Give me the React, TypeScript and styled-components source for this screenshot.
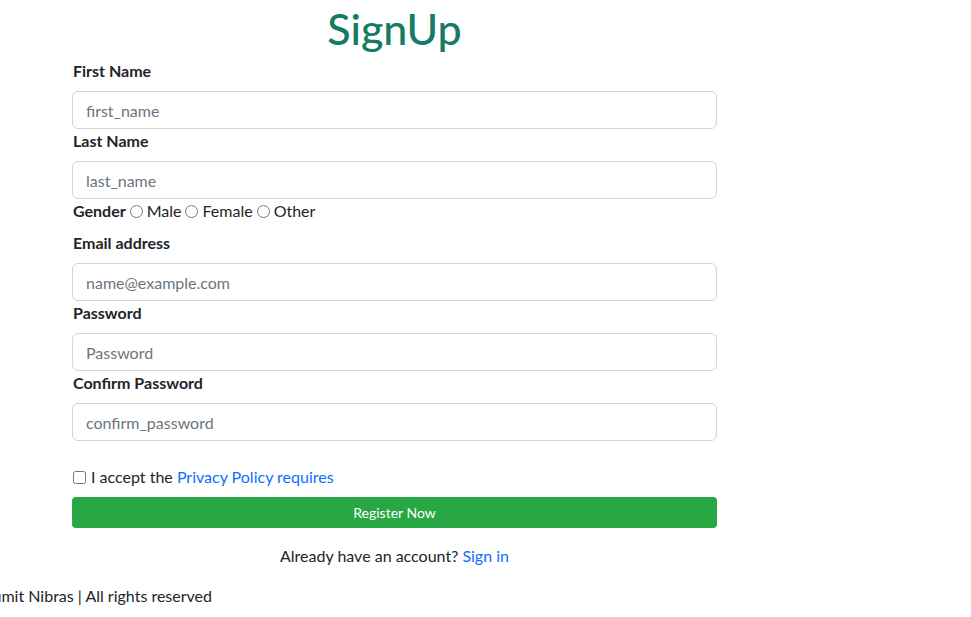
import React from "react";
import styled, { createGlobalStyle } from "styled-components";

const GlobalStyle = createGlobalStyle`
  *, *::before, *::after { box-sizing: border-box; }
  html, body { margin: 0; padding: 0; background: #fff; }
  body {
    font-family: Lato, "Noto Sans", sans-serif;
    font-size: 16px;
    line-height: 24px;
    color: #212529;
  }
`;

const Page = styled.div`
  display: flex;
  flex-direction: column;
  width: 971px;
`;

const Form = styled.form`
  width: 645px;
  margin-left: 72px;
  display: flex;
  flex-direction: column;
`;

const Title = styled.h1`
  margin: 5px 0 6px;
  text-align: center;
  font-size: 43px;
  line-height: 48px;
  font-weight: 500;
  color: #177a65;
`;

const Field = styled.div`
  display: flex;
  flex-direction: column;
`;

const Label = styled.label`
  font-weight: 700;
  line-height: 24px;
  margin-bottom: 8px;
  padding-left: 1px;
`;

const Input = styled.input`
  height: 38px;
  width: 100%;
  padding: 0 13px;
  border: 1px solid #ced4da;
  border-radius: 6px;
  font-family: inherit;
  font-size: 16px;
  color: #212529;
  background: #fff;
  outline: none;
  &::placeholder { color: #6c757d; }
`;

const GenderRow = styled.div`
  display: flex;
  align-items: center;
  line-height: 24px;
  margin-bottom: 8px;
  padding-left: 1px;
`;

const GenderLabel = styled.span`
  font-weight: 700;
`;

const RadioOption = styled.label`
  display: inline-flex;
  align-items: center;
`;

const Radio = styled.input`
  width: 13px;
  height: 13px;
  margin: 0 4px 0 4px;
`;

const CheckRow = styled.div`
  display: flex;
  align-items: center;
  white-space: pre;
  margin-top: 24px;
  margin-bottom: 8px;
`;

const Checkbox = styled.input`
  width: 13px;
  height: 13px;
  margin: 0 5px 0 1px;
`;

const Link = styled.a`
  color: #0d6efd;
  text-decoration: none;
`;

const Button = styled.button`
  height: 31px;
  width: 100%;
  border: none;
  border-radius: 4px;
  background: #28a745;
  color: #fff;
  font-family: inherit;
  font-size: 14px;
  cursor: pointer;
`;

const SignInLine = styled.p`
  margin: 16px 0 0;
  text-align: center;
`;

const Footer = styled.footer`
  width: 212px;
  display: flex;
  justify-content: flex-end;
  white-space: nowrap;
  margin-top: 16px;
`;

const fields1 = [
  { id: "first_name", label: "First Name", placeholder: "first_name" },
  { id: "last_name", label: "Last Name", placeholder: "last_name" },
];
const fields2 = [
  { id: "email", label: "Email address", placeholder: "name@example.com" },
  { id: "password", label: "Password", placeholder: "Password" },
  { id: "confirm_password", label: "Confirm Password", placeholder: "confirm_password" },
];

export default function App() {
  return (
    <Page>
      <GlobalStyle />
      <Form onSubmit={(e) => e.preventDefault()}>
        <Title>SignUp</Title>
        {fields1.map((f) => (
          <Field key={f.id}>
            <Label htmlFor={f.id}>{f.label}</Label>
            <Input id={f.id} type="text" placeholder={f.placeholder} />
          </Field>
        ))}
        <GenderRow>
          <GenderLabel>Gender</GenderLabel>
          {["Male", "Female", "Other"].map((g) => (
            <RadioOption key={g}>
              <Radio type="radio" name="gender" value={g} />
              {g}
            </RadioOption>
          ))}
        </GenderRow>
        {fields2.map((f) => (
          <Field key={f.id}>
            <Label htmlFor={f.id}>{f.label}</Label>
            <Input id={f.id} type="text" placeholder={f.placeholder} />
          </Field>
        ))}
        <CheckRow>
          <Checkbox type="checkbox" id="accept" />
          <label htmlFor="accept">I accept the </label>
          <Link href="#">Privacy Policy requires</Link>
        </CheckRow>
        <Button type="submit">Register Now</Button>
        <SignInLine>
          Already have an account? <Link href="#">Sign in</Link>
        </SignInLine>
      </Form>
      <Footer>© Copyright Sumit Nibras | All rights reserved</Footer>
    </Page>
  );
}
